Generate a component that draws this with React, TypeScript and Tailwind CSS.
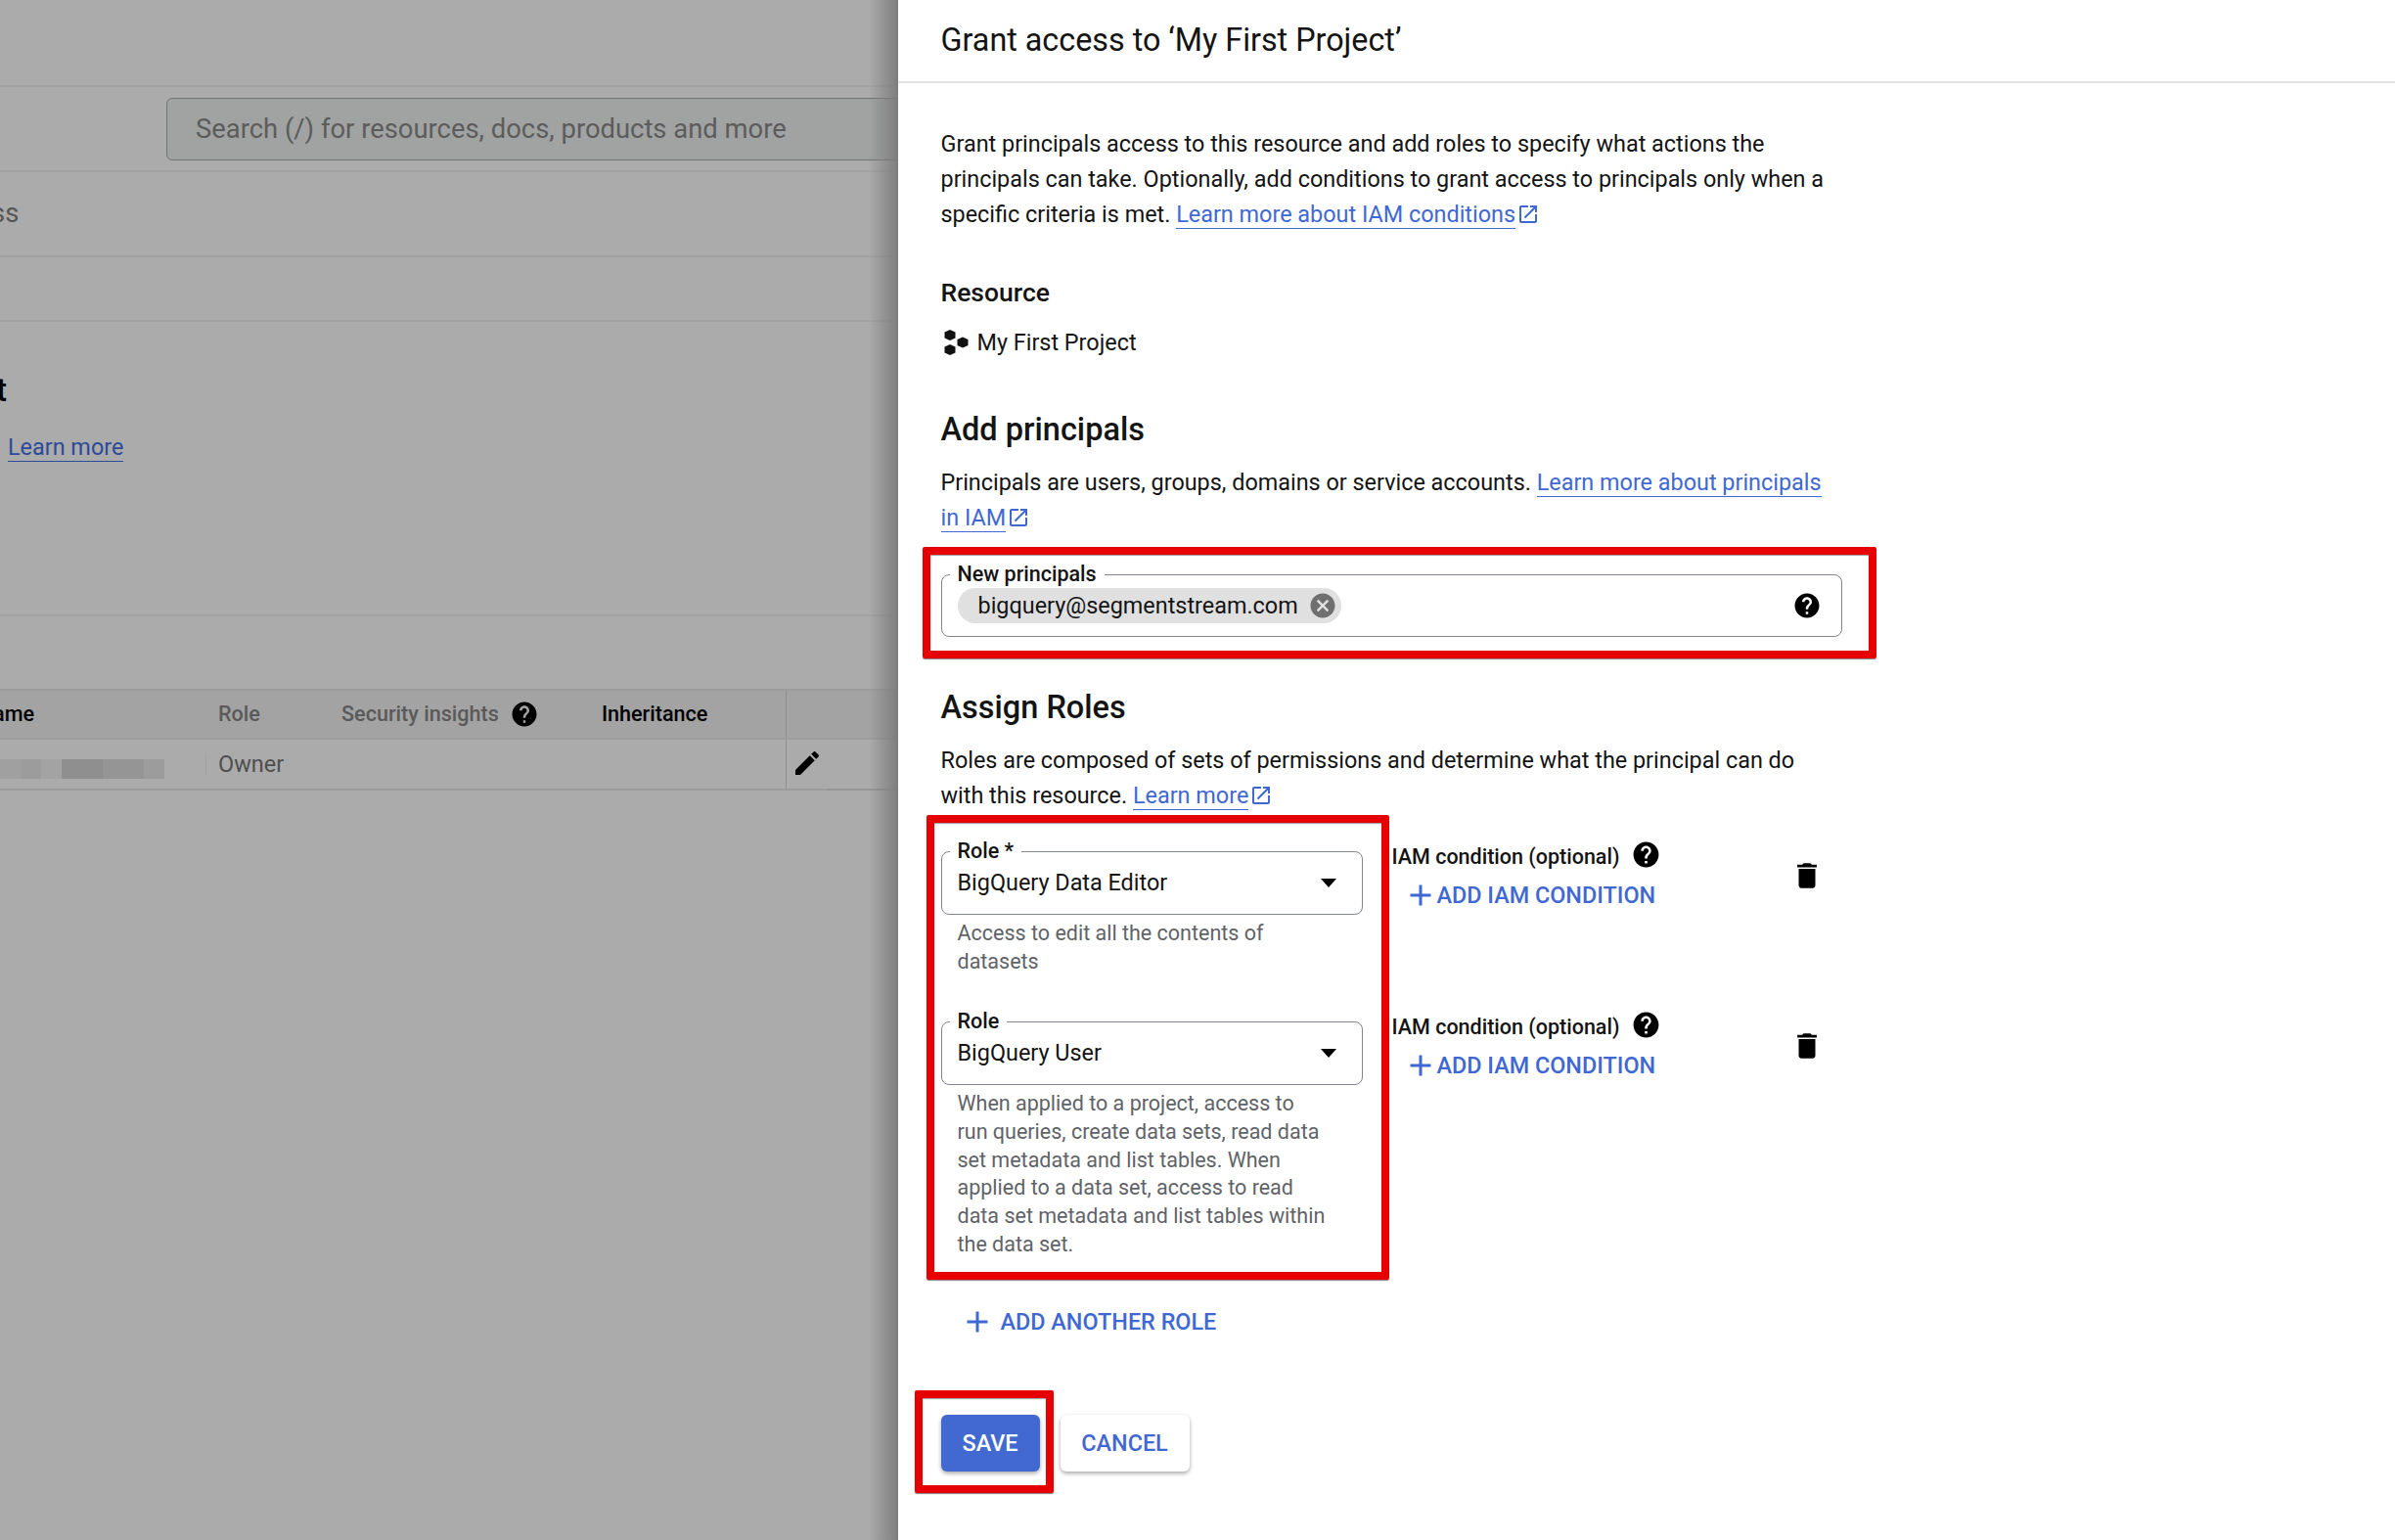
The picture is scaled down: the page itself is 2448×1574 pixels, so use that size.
import React from "react";

const ICON = {
  help: "M12 2C6.48 2 2 6.48 2 12s4.48 10 10 10 10-4.48 10-10S17.52 2 12 2zm1 17h-2v-2h2v2zm2.07-7.75l-.9.92C13.45 12.9 13 13.5 13 15h-2v-.5c0-1.1.45-2.1 1.17-2.83l1.24-1.26c.37-.36.59-.86.59-1.41 0-1.1-.9-2-2-2s-2 .9-2 2H8c0-2.21 1.79-4 4-4s4 1.79 4 4c0 .88-.36 1.68-.93 2.25z",
  trash: "M6 19c0 1.1.9 2 2 2h8c1.1 0 2-.9 2-2V7H6v12zM19 4h-3.5l-1-1h-5l-1 1H5v2h14V4z",
  pencil: "M3 17.25V21h3.75L17.81 9.94l-3.75-3.75L3 17.25zM20.71 7.04c.39-.39.39-1.02 0-1.41l-2.34-2.34c-.39-.39-1.02-.39-1.41 0l-1.83 1.83 3.75 3.75 1.83-1.83z",
  open: "M19 19H5V5h7V3H5c-1.11 0-2 .9-2 2v14c0 1.1.89 2 2 2h14c1.1 0 2-.9 2-2v-7h-2v7zM14 3v2h3.59l-9.83 9.83 1.41 1.41L19 6.41V10h2V3h-7z",
  cancel: "M12 2C6.47 2 2 6.47 2 12s4.47 10 10 10 10-4.47 10-10S17.53 2 12 2zm5 13.59L15.59 17 12 13.41 8.41 17 7 15.59 10.59 12 7 8.41 8.41 7 12 10.59 15.59 7 17 8.41 13.41 12 17 15.59z",
  plus: "M19 13h-6v6h-2v-6H5v-2h6V5h2v6h6v2z",
};

const Icon = ({ d, className }: { d: string; className: string }) => (
  <svg viewBox="0 0 24 24" fill="currentColor" className={className}>
    <path d={d} />
  </svg>
);

const ExtLink = ({ children }: { children: React.ReactNode }) => (
  <>
    <a className="text-[#3f68d2] border-b border-[#3f68d2]">{children}</a>
    <Icon d={ICON.open} className="inline-block w-[24px] h-[24px] ml-[1px] -mt-[3px] text-[#3f68d2]" />
  </>
);

// outlined field with the label sitting on the top border
const Outlined = ({ label, className, children }: { label: string; className: string; children: React.ReactNode }) => (
  <div className={`relative border border-[#80868b] rounded-[8px] ${className}`}>
    <span className="absolute left-[8px] -top-[14px] bg-white px-[8px] text-[21.5px] leading-[26px] font-medium text-[#141414]">
      {label}
    </span>
    {children}
  </div>
);

const RoleRow = ({ label, value, help, helpHeight }: { label: string; value: string; help: string; helpHeight: string }) => (
  <div className="flex">
    <div className="w-[431px] shrink-0">
      <Outlined label={label} className="h-[65px] flex items-center justify-between pl-[16px] pr-[26px]">
        <span className="text-[23.4px] text-[#141414] -mt-[1px]">{value}</span>
        <span className="w-0 h-0 border-x-[8.5px] border-x-transparent border-t-[9px] border-t-black" />
      </Outlined>
      <p className={`pl-[17px] pr-[20px] pt-[5px] text-[21.5px] leading-[28.8px] text-[#5f6368] whitespace-pre-line ${helpHeight}`}>{help}</p>
    </div>
    <div className="ml-[30px] w-[290px] shrink-0 -mt-[8px]">
      <div className="flex items-center h-[28px] text-[21.5px] font-medium text-[#141414]">
        IAM condition (optional)
        <Icon d={ICON.help} className="w-[31px] h-[31px] ml-[12px] -mt-[5px] text-black" />
      </div>
      <div className="flex items-center mt-[7px] ml-[15px] text-[23.4px] font-medium text-[#3f68d2]">
        <Icon d={ICON.plus} className="w-[36px] h-[36px] -mx-[4px] shrink-0" />
        <span className="ml-[3px]">ADD IAM CONDITION</span>
      </div>
    </div>
    <Icon d={ICON.trash} className="w-[34px] h-[34px] ml-[117px] mt-[8px] text-black shrink-0" />
  </div>
);

const Backdrop = () => (
  <div className="relative w-[918px] h-full shrink-0 overflow-hidden bg-[#ababab] text-[#505050]">
    <div className="h-[89px] border-b-2 border-[#a2a2a2]" />
    <div className="h-[87px] border-b-2 border-[#a2a2a2] pl-[170px] pt-[11px]">
      <div className="h-[64px] w-[800px] rounded-[6px] border border-[#707472] bg-[#a1a3a2] pl-[29px] pt-[2px] flex items-center text-[27.4px] text-[#5c5c5c]">
        Search (/) for resources, docs, products and more
      </div>
    </div>
    <div className="h-[87px] border-b-2 border-[#a2a2a2] flex items-center text-[27.4px] text-[#555] overflow-hidden">
      <span className="-ml-[9px]">ss</span>
    </div>
    <div className="h-[66px] border-b-2 border-[#a2a2a2]" />
    <div className="h-[301px] border-b-2 border-[#a2a2a2] pt-[50px]">
      <div className="-ml-[4px] text-[33px] leading-[40px] font-medium text-black">t</div>
      <div className="mt-[21px] ml-[8px]">
        <a className="text-[23.4px] text-[#2d4a9a] border-b border-[#2d4a9a]">Learn more</a>
      </div>
    </div>
    <div className="h-[74px]" />
    <div className="h-[52px] flex bg-[#a3a3a3] border-y-2 border-[#9c9c9c] items-center text-[21.6px] relative">
      <span className="absolute -left-[7px] font-medium text-black">ame</span>
      <span className="ml-[223px] w-[126px] font-medium text-[#5a5a5a]">Role</span>
      <span className="font-medium text-[#5a5a5a]">Security insights</span>
      <Icon d={ICON.help} className="w-[30px] h-[30px] ml-[11px] text-black" />
      <span className="ml-[64px] font-medium text-black">Inheritance</span>
      <span className="absolute left-[803px] top-0 bottom-0 w-[1px] bg-[#8f8f8f]" />
    </div>
    <div className="h-[52px] flex items-center border-b-2 border-[#9c9c9c] text-[23.5px] relative">
      <div className="flex w-[168px] h-[20px] mt-[10px] shrink-0">
        <div className="w-[21px] bg-[#a0a0a0]" />
        <div className="w-[21px] bg-[#9c9c9c]" />
        <div className="w-[21px] bg-[#a3a3a3]" />
        <div className="w-[42px] bg-[#8f8f8f]" />
        <div className="w-[42px] bg-[#959595]" />
        <div className="w-[21px] bg-[#9c9c9c]" />
      </div>
      <span className="absolute left-[210px] top-[14px] h-[22px] w-[1px] bg-[#a3a3a3]" />
      <span className="ml-[55px] mt-[2px] text-[#4f4f4f]">Owner</span>
      <span className="absolute left-[803px] top-0 bottom-0 w-[1px] bg-[#8f8f8f]" />
      <Icon d={ICON.pencil} className="absolute left-[809px] top-[8px] w-[32px] h-[32px] text-black" />
      <span className="absolute left-[845px] -bottom-[2px] w-[66px] h-[2px] bg-[#959595]" />
    </div>
    <div className="absolute top-0 right-0 bottom-0 w-[30px] bg-gradient-to-r from-transparent to-[#7d7d7d]" />
  </div>
);

export default function App() {
  return (
    <div className="flex h-[1574px] w-[2448px] overflow-hidden bg-white" style={{ fontFamily: 'Roboto, "Noto Sans", sans-serif' }}>
      <Backdrop />
      <div className="relative flex-1 text-[#141414]">
        <div className="h-[85px] border-b-2 border-[#e3e3e3] pl-[43.5px] pt-[21px] text-[32.3px] leading-[40px]">
          Grant access to ‘My First Project’
        </div>

        <div className="pl-[43.5px] w-[950px] text-[23.4px] leading-[36px]">
          <p className="mt-[44px] w-[905px]">
            Grant principals access to this resource and add roles to specify what actions the principals can take. Optionally, add conditions to grant access to principals only when a specific criteria is met.{" "}
            <ExtLink>Learn more about IAM conditions</ExtLink>
          </p>

          <h3 className="mt-[46px] text-[26.5px] leading-[32px] font-medium">Resource</h3>
          <div className="mt-[19px] flex items-center h-[32px]">
            <svg viewBox="0 0 28 28" className="w-[28px] h-[28px] ml-[1px]" fill="#111">
              <polygon points="8,1 13.5,3.5 13.5,9.5 8,12 2.5,9.5 2.5,3.5" />
              <polygon points="8,16 13.5,18.5 13.5,24.5 8,27 2.5,24.5 2.5,18.5" />
              <polygon points="21,8.5 26.5,11 26.5,17 21,19.5 15.5,17 15.5,11" />
            </svg>
            <span className="ml-[8px]">My First Project</span>
          </div>

          <h2 className="mt-[53px] text-[32.5px] leading-[40px] font-medium">Add principals</h2>
          <p className="mt-[16px] w-[905px]">
            Principals are users, groups, domains or service accounts.{" "}
            <ExtLink>Learn more about principals in IAM</ExtLink>
          </p>

          <Outlined label="New principals" className="mt-[40px] w-[921px] h-[64px] flex items-center justify-between pl-[16px] pr-[20px]">
            <span className="flex items-center h-[36px] w-[392px] rounded-full bg-[#e0e0e0] pl-[21px]">
              <span className="flex-1 text-[23.4px]">bigquery@segmentstream.com</span>
              <Icon d={ICON.cancel} className="w-[30px] h-[30px] mr-[4px] text-[#6f6f6f]" />
            </span>
            <Icon d={ICON.help} className="w-[30px] h-[30px] text-black" />
          </Outlined>

          <h2 className="mt-[52px] text-[32.5px] leading-[40px] font-medium">Assign Roles</h2>
          <p className="mt-[16px] w-[905px]">
            Roles are composed of sets of permissions and determine what the principal can do with this resource.{" "}
            <ExtLink>Learn more</ExtLink>
          </p>

          <div className="mt-[39px]">
            <RoleRow
              label="Role *"
              value="BigQuery Data Editor"
              help={"Access to edit all the contents of\ndatasets"}
              helpHeight="h-[109px]"
            />
            <RoleRow
              label="Role"
              value="BigQuery User"
              help={"When applied to a project, access to\nrun queries, create data sets, read data\nset metadata and list tables. When\napplied to a data set, access to read\ndata set metadata and list tables within\nthe data set."}
              helpHeight="h-[199px]"
            />
          </div>

          <div className="mt-[27px] ml-[23px] flex items-center font-medium text-[#3f68d2] h-[32px]">
            <Icon d={ICON.plus} className="w-[36px] h-[36px] -mx-[4px] shrink-0" />
            <span className="ml-[10px]">ADD ANOTHER ROLE</span>
          </div>

          <div className="mt-[79px] flex gap-[21px] font-medium">
            <button className="h-[58px] w-[101px] rounded-[6px] bg-[#4169d1] text-white shadow-[0_2px_4px_rgba(0,0,0,0.35)]">SAVE</button>
            <button className="h-[58px] w-[132px] rounded-[6px] bg-white text-[#3f68d2] shadow-[0_2px_4px_rgba(0,0,0,0.35)]">CANCEL</button>
          </div>
        </div>

        {/* red annotation boxes drawn over the form */}
        <div className="absolute left-[25px] top-[559px] w-[975px] h-[114px] rounded-[2px] border-8 border-[#e60000] shadow-[0_1px_1px_rgba(0,0,0,0.5),inset_0_1px_1px_rgba(0,0,0,0.4)]" />
        <div className="absolute left-[29px] top-[833px] w-[473px] h-[475px] rounded-[2px] border-8 border-[#e60000] shadow-[0_1px_1px_rgba(0,0,0,0.5),inset_0_1px_1px_rgba(0,0,0,0.4)]" />
        <div className="absolute left-[17px] top-[1421px] w-[142px] h-[105px] rounded-[2px] border-8 border-[#e60000] shadow-[0_1px_1px_rgba(0,0,0,0.5),inset_0_1px_1px_rgba(0,0,0,0.4)]" />
      </div>
    </div>
  );
}
